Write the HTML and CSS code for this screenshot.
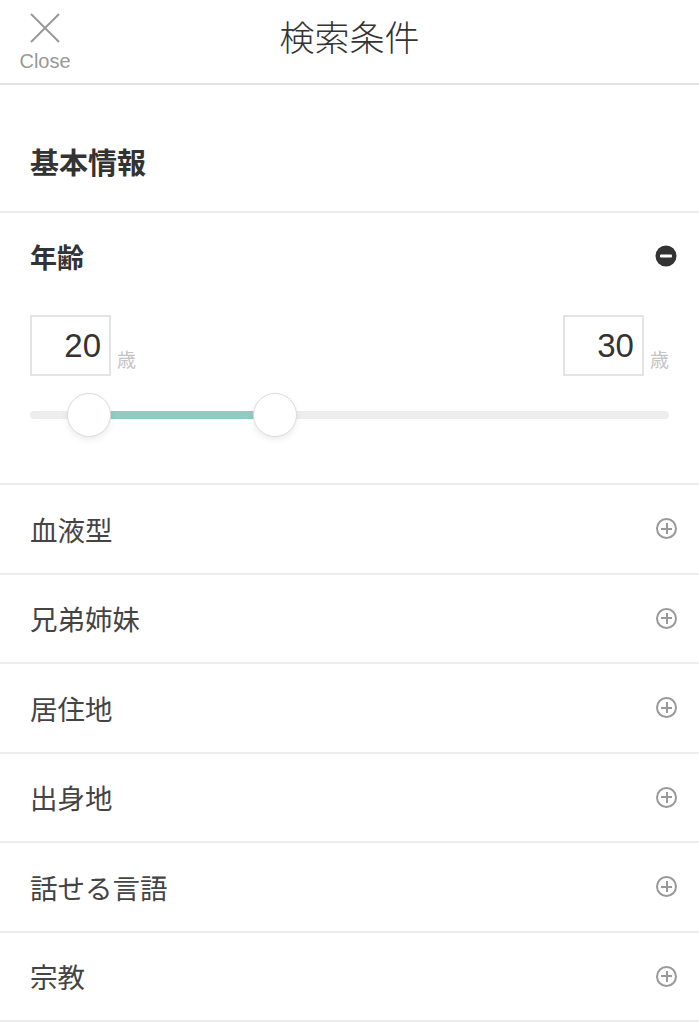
FILE: index.html
```html
<!DOCTYPE html>
<html lang="ja">
  <head>
    <meta charset="UTF-8" />
    <meta name="viewport" content="width=device-width, initial-scale=1.0" />
    <title>検索条件</title>
    <link rel="stylesheet" href="styles.css">
  </head>
  <body>
    <header class="top-bar">
      <a class="close-btn">
        <svg class="close-icon" width="30" height="30" viewBox="0 0 30 30">
          <path d="M1 1 L29 29 M29 1 L1 29" stroke="#999" stroke-width="2" fill="none" />
        </svg>
        <span class="close-label">Close</span>
      </a>
      <h1 class="top-title">検索条件</h1>
      <div></div>
    </header>

    <section class="group-head">
      <h2>基本情報</h2>
    </section>

    <section class="age">
      <div class="age-head">
        <h3>年齢</h3>
        <svg class="toggle" width="22" height="22" viewBox="0 0 22 22">
          <circle cx="11" cy="11" r="10.5" fill="#333" />
          <rect x="5" y="9.5" width="12" height="3" rx="1" fill="#fff" />
        </svg>
      </div>

      <div class="age-inputs">
        <div class="age-field">
          <div class="age-box">20</div>
          <span class="age-unit">歳</span>
        </div>
        <div class="age-field">
          <div class="age-box">30</div>
          <span class="age-unit">歳</span>
        </div>
      </div>

      <div class="slider">
        <div class="slider-track"></div>
        <div class="slider-fill" style="left: 58px; width: 187px"></div>
        <div class="slider-thumb" style="left: 37px"></div>
        <div class="slider-thumb" style="left: 223px"></div>
      </div>
    </section>

    <ul class="filter-list">
      <li class="filter-row"><span>血液型</span><i class="plus"></i></li>
      <li class="filter-row"><span>兄弟姉妹</span><i class="plus"></i></li>
      <li class="filter-row"><span>居住地</span><i class="plus"></i></li>
      <li class="filter-row"><span>出身地</span><i class="plus"></i></li>
      <li class="filter-row"><span>話せる言語</span><i class="plus"></i></li>
      <li class="filter-row"><span>宗教</span><i class="plus"></i></li>
    </ul>
  </body>
</html>
```

FILE: styles.css
```css
body {
  margin: 0;
  background-color: #fff;
  color: #333;
  font-family: "Liberation Sans", "Noto Sans CJK JP", sans-serif;
}

h1, h2, h3 {
  margin: 0;
}

.top-bar {
  height: 83px;
  border-bottom: 2px solid #e2e2e2;
  display: grid;
  grid-template-columns: 1fr auto 1fr;
  align-items: start;
}

.close-btn {
  width: 50px;
  margin-left: 20px;
  padding-top: 13px;
  display: flex;
  flex-direction: column;
  align-items: center;
  cursor: pointer;
}
.close-icon {
  display: block;
}
.close-label {
  margin-top: 7px;
  font-size: 20px;
  line-height: 22px;
  color: #999;
}

.top-title {
  padding-top: 12px;
  font-family: "Noto Sans CJK JP", sans-serif;
  font-size: 35px;
  line-height: 48px;
  font-weight: 300;
  color: #333;
}

.group-head {
  height: 128px;
  box-sizing: border-box;
  padding: 26px 0 0 30px;
  border-bottom: 2px solid #ececec;
  display: flex;
  align-items: center;
}
.group-head h2 {
  font-family: "Noto Sans CJK JP", sans-serif;
  font-size: 29px;
  line-height: 40px;
  font-weight: 700;
  color: #333;
}

.age {
  padding: 21px 0 46px 30px;
  border-bottom: 2px solid #ececec;
}

.age-head {
  height: 44px;
  padding-right: 22px;
  display: flex;
  align-items: center;
  justify-content: space-between;
}
.age-head h3 {
  font-family: "Noto Sans CJK JP", sans-serif;
  font-size: 27px;
  font-weight: 700;
  color: #333;
}
.toggle {
  display: block;
}

.age-inputs {
  margin-top: 37px;
  padding-right: 30px;
  display: flex;
  justify-content: space-between;
}
.age-field {
  display: flex;
  align-items: flex-end;
  gap: 6px;
}
.age-box {
  width: 81px;
  height: 61px;
  box-sizing: border-box;
  border: 2px solid #e4e4e4;
  padding-right: 8px;
  display: flex;
  align-items: center;
  justify-content: flex-end;
  font-size: 33px;
  color: #333;
}
.age-unit {
  padding-bottom: 6px;
  font-family: "Noto Sans CJK JP", sans-serif;
  font-size: 19px;
  line-height: 22px;
  color: #c4c4c4;
}

.slider {
  position: relative;
  height: 44px;
  margin: 17px 30px 0 0;
}
.slider-track {
  position: absolute;
  left: 0;
  right: 0;
  top: 18px;
  height: 8px;
  border-radius: 4px;
  background-color: #ededed;
}
.slider-fill {
  position: absolute;
  top: 18px;
  height: 8px;
  background-color: #8ecdc3;
}
.slider-thumb {
  position: absolute;
  top: 0;
  width: 44px;
  height: 44px;
  box-sizing: border-box;
  border-radius: 50%;
  border: 1px solid #dcdcdc;
  background-color: #fff;
  box-shadow: 0 3px 6px rgba(0, 0, 0, 0.08);
}

.filter-list {
  list-style: none;
  margin: 0;
  padding: 0;
}
.filter-row {
  height: 89.5px;
  box-sizing: border-box;
  padding: 0 22px 0 30px;
  border-bottom: 2px solid #ececec;
  display: flex;
  align-items: center;
  justify-content: space-between;
  font-family: "Noto Sans CJK JP", sans-serif;
  font-size: 27.5px;
  color: #444;
}

.plus {
  position: relative;
  width: 21px;
  height: 21px;
  box-sizing: border-box;
  border: 2px solid #999;
  border-radius: 50%;
}
.plus::before,
.plus::after {
  content: '';
  position: absolute;
  background-color: #999;
}
.plus::before {
  left: 3px;
  right: 3px;
  top: 7.5px;
  height: 2px;
}
.plus::after {
  top: 3px;
  bottom: 3px;
  left: 7.5px;
  width: 2px;
}
```
